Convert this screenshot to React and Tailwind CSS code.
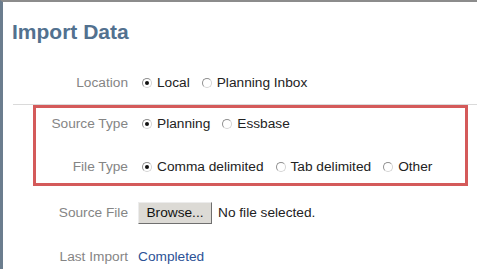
import React from "react";

function Radio({ checked }) {
  return (
    <span className="ml-[4px] mr-[5px] inline-flex h-[10px] w-[10px] shrink-0 items-center justify-center rounded-full border border-[#8f8f8f] border-r-[#d4d4d4] border-b-[#d4d4d4] bg-white">
      {checked && <span className="h-[4px] w-[4px] rounded-full bg-[#111]" />}
    </span>
  );
}

function Option({ checked, label }) {
  return (
    <span className="flex items-center">
      <Radio checked={checked} />
      <span>{label}</span>
    </span>
  );
}

function Row({ label, labelWidth, children, className = "" }) {
  return (
    <div className={"flex h-[24px] items-center " + className}>
      <div className="shrink-0 text-right text-[#858585]" style={{ width: labelWidth }}>
        {label}
      </div>
      <div className="ml-[10px] flex items-center gap-[8px] text-[#222]">{children}</div>
    </div>
  );
}

export default function App() {
  return (
    <div
      className="h-[269px] w-[477px] overflow-hidden border-l-[3px] border-t-2 border-l-[#6b7d8e] border-t-[#8c8c8c] bg-white text-[13.7px] leading-none"
      style={{ fontFamily: '"Liberation Sans", Arial, sans-serif' }}
    >
      <div className="h-[69px] pl-[9px] pt-[18px]">
        <h1 className="text-[21px] font-bold leading-[24px] text-[#52718f]">Import Data</h1>
      </div>
      <Row label="Location" labelWidth={125}>
        <Option checked label="Local" />
        <Option label="Planning Inbox" />
      </Row>
      <div className="ml-[10px] mt-[9px] border-t border-[#dadada]" />
      <div className="ml-[30px] w-[435px] border-[3px] border-[#d45a5a] px-0 pb-[4px] pt-[4px]">
        <Row label="Source Type" labelWidth={92}>
          <Option checked label="Planning" />
          <Option label="Essbase" />
        </Row>
        <Row label="File Type" labelWidth={92} className="mt-[19px]">
          <Option checked label="Comma delimited" />
          <Option label="Tab delimited" />
          <Option label="Other" />
        </Row>
      </div>
      <Row label="Source File" labelWidth={125} className="mt-[15px]">
        <span className="flex h-[22px] w-[74px] items-center justify-center border border-[#ececec] border-b-[#6f6f6f] border-r-[#6f6f6f] bg-[#dcdad5] text-[#111]">
          Browse...
        </span>
        <span className="-ml-[2px]">No file selected.</span>
      </Row>
      <Row label="Last Import" labelWidth={125} className="mt-[20px]">
        <span className="text-[#2c5296]">Completed</span>
      </Row>
    </div>
  );
}
